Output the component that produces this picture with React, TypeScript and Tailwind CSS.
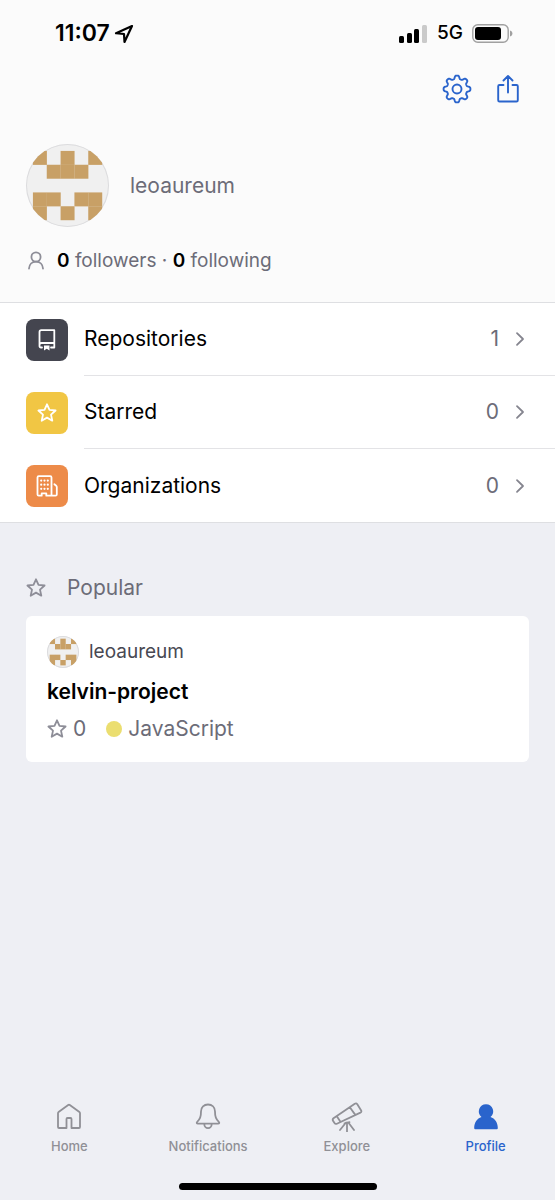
import React from 'react';

interface MenuItem {
  label: string;
  count: number;
  icon: React.ReactNode;
  bgClass: string;
}

interface TabItem {
  label: string;
  icon: React.ReactNode;
  active?: boolean;
}

const AVATAR_CELLS = [
  [0, 0], [2, 0], [4, 0],
  [1, 1], [2, 1], [3, 1],
  [0, 3], [1, 3], [3, 3], [4, 3],
  [0, 4], [2, 4], [4, 4],
];

const Avatar: React.FC<{ className: string }> = ({ className }) => (
  <svg viewBox="0 0 12 12" className={`shrink-0 rounded-full bg-[#f0f0f0] ring-1 ring-inset ring-[#dcdcde] ${className}`}>
    {AVATAR_CELLS.map(([x, y]) => (
      <rect key={`${x}-${y}`} x={1 + x * 2} y={1 + y * 2} width="2.02" height="2.02" fill="#c8a066" />
    ))}
  </svg>
);

const StarIcon: React.FC<{ className?: string }> = ({ className = '' }) => (
  <svg width="20" height="20" viewBox="0 0 20 20" fill="none" stroke="currentColor" strokeWidth="1.8" strokeLinejoin="round" className={`shrink-0 ${className}`}>
    <path d="M10 1.3l2.5 5.6 6.1.6-4.6 4.1 1.3 6.100L10 14.600l-5.300 3.100L6 11.600 1.400 7.500l6.100-.6z" />
  </svg>
);

const RepoIcon = () => (
  <svg width="18" height="22" viewBox="0 0 18 22" fill="none" stroke="currentColor" strokeWidth="1.8" strokeLinecap="round" strokeLinejoin="round">
    <path d="M4 18.500H3Q1.500 18.500 1.500 17V3Q1.500 1.200 3.300 1.200h13V18.500H13M1.500 15.500q.3-1.500 2-1.500h12.800" />
    <path d="M6 16.500h5.500v5l-2.750-1.800L6 21.500z" fill="currentColor" stroke="none" />
  </svg>
);

const OrganizationIcon = () => (
  <svg width="22" height="22" viewBox="0 0 22 22" fill="none" stroke="currentColor" strokeWidth="1.800" strokeLinecap="round" strokeLinejoin="round">
    <path d="M15.500 20.700V2.500q0-1.300-1.300-1.300H2.800Q1.500 1.200 1.500 2.500v17q0 1.200 1.200 1.200h3v-2.400h4.600v2.400h9.300q1.200 0 1.200-1.200V12q0-.8-.6-1.300l-1.800-1.500" />
    <path d="M5.200 5.600h.01M8.500 5.600h.01M11.800 5.600h.01M5.200 9.700h.01M8.500 9.700h.01M11.800 9.700h.01M5.200 13.800h.01M8.500 13.800h.01M11.800 13.800h.01" strokeWidth="2.200" />
  </svg>
);

const LocationIcon = () => (
  <svg width="20" height="20" viewBox="0 0 20 20" fill="none" stroke="currentColor" strokeWidth="2.200" strokeLinejoin="round">
    <path d="M18 2L2 9.200l8 .8.500 8z" />
  </svg>
);

const SignalIcon = () => (
  <svg width="29" height="18" viewBox="0 0 29 18" fill="currentColor">
    <rect x="0" y="11" width="5" height="7" rx="1.5" />
    <rect x="8" y="8" width="5" height="10" rx="1.5" />
    <rect x="15" y="4" width="5" height="14" rx="1.5" />
    <rect x="23" y="0" width="5" height="18" rx="1.5" fill="#cacaca" />
  </svg>
);

const BatteryIcon = () => (
  <svg width="41" height="19" viewBox="0 0 41 19" fill="none">
    <rect x=".8" y=".8" width="35.4" height="17.4" rx="5" stroke="#a0a0a0" strokeWidth="1.4" />
    <rect x="3" y="3" width="26" height="13" rx="3" fill="#000" />
    <path d="M38 6.5c1.5.4 2.4 1.5 2.4 3s-.9 2.6-2.4 3z" fill="#a0a0a0" />
  </svg>
);

// eight soft teeth around the hub
const GEAR_POINTS = Array.from({ length: 160 }, (_, i) => {
  const angle = (i / 160) * Math.PI * 2;
  const radius = 11.8 + 1.7 * Math.tanh(1.8 * Math.cos(8 * angle));
  return `${(15 + radius * Math.cos(angle)).toFixed(2)},${(15 + radius * Math.sin(angle)).toFixed(2)}`;
}).join(' ');

const GearIcon = () => (
  <svg width="30" height="30" viewBox="0 0 30 30" fill="none" stroke="currentColor" strokeWidth="1.9" strokeLinejoin="round">
    <circle cx="15" cy="15" r="4.500" />
    <polygon points={GEAR_POINTS} />
  </svg>
);

const ShareIcon = () => (
  <svg width="24" height="30" viewBox="0 0 24 30" fill="none" stroke="currentColor" strokeWidth="1.900" strokeLinecap="round" strokeLinejoin="round">
    <path d="M7.500 11H3.500Q2.200 11 2.200 12.300v13.900Q2.200 27.500 3.500 27.500h17q1.300 0 1.300-1.300V12.300q0-1.300-1.300-1.300H16.500M12 18.500V2M7.500 6.500L12 2l4.500 4.500" />
  </svg>
);

const FollowersIcon = () => (
  <svg width="20" height="20" viewBox="0 0 20 20" fill="none" stroke="currentColor" strokeWidth="1.800" strokeLinecap="round" className="text-[#8e8e98]">
    <circle cx="10" cy="6" r="4.600" />
    <path d="M3 17.500c.2-3.900 2.900-6.900 7-6.900s6.800 3 7 6.900" />
  </svg>
);

const ChevronIcon = () => (
  <svg width="10" height="16" viewBox="0 0 10 16" fill="none" stroke="currentColor" strokeWidth="1.800" strokeLinecap="round" strokeLinejoin="round" className="text-[#85858f]">
    <path d="M2 2.200L8 8l-6 5.800" />
  </svg>
);

const HomeIcon = () => (
  <svg width="32" height="32" viewBox="0 0 32 32" fill="none" stroke="currentColor" strokeWidth="1.800" strokeLinejoin="round">
    <path d="M5 13.200Q5 12.400 5.600 11.900L15.200 5q.8-.6 1.600 0l9.600 6.900q.6.500.6 1.300V27q0 1-1 1h-7.500V19q0-1-1-1h-3q-1 0-1 1v9H6q-1 0-1-1z" />
  </svg>
);

const BellIcon = () => (
  <svg width="32" height="32" viewBox="0 0 32 32" fill="none" stroke="currentColor" strokeWidth="1.800" strokeLinejoin="round">
    <path d="M9 11.500C9 7 12 4.500 16 4.500s7 2.500 7 7c0 5.500 1 7.300 3.900 10.500.7.900.3 1.700-.7 1.700H5.800c-1 0-1.400-.8-.7-1.700C8 18.800 9 17 9 11.500zM12.300 24c0 2.400 1.600 4.200 3.700 4.200s3.700-1.800 3.700-4.200" />
  </svg>
);

const TelescopeIcon = () => (
  <svg width="32" height="32" viewBox="0 0 32 32" fill="none" stroke="currentColor" strokeWidth="1.800" strokeLinecap="round" strokeLinejoin="round">
    <path d="M2.500 18.300L23.800 3.800q1.500-1 2.500.5l3.700 5.900q1 1.600-.6 2.400L5.900 23.700q-1.500.7-2.400-.6l-1.500-2.400q-.8-1.300.500-2.400zM5.800 16.200l3.800 5.700M18.800 7.300l5.500 7.600M16 22.500v9M14.800 22.800L9 30M17.500 22.800L23 30M13.500 23.300l5-1.200" />
  </svg>
);

const ProfileIcon = () => (
  <svg width="32" height="32" viewBox="0 0 32 32" fill="currentColor">
    <path d="M16 4.200a7.200 7.200 0 0 0-4.500 12.800C7 18.500 4.200 22.500 4.200 28q0 1.200 1 1.200h21.600q1 0 1-1.200c0-5.500-2.800-9.500-7.300-11A7.200 7.200 0 0 0 16 4.200z" />
  </svg>
);

const MENU: MenuItem[] = [
  { label: 'Repositories', count: 1, icon: <RepoIcon />, bgClass: 'bg-[#44454f]' },
  { label: 'Starred', count: 0, icon: <StarIcon />, bgClass: 'bg-[#f1c644]' },
  { label: 'Organizations', count: 0, icon: <OrganizationIcon />, bgClass: 'bg-[#ed8b49]' },
];

const TABS: TabItem[] = [
  { label: 'Home', icon: <HomeIcon /> },
  { label: 'Notifications', icon: <BellIcon /> },
  { label: 'Explore', icon: <TelescopeIcon /> },
  { label: 'Profile', icon: <ProfileIcon />, active: true },
];

const StatusBar = () => (
  <div className="flex h-[67px] items-center justify-between pl-[55px] pr-[42px] text-black">
    <div className="flex items-center gap-1">
      <span className="text-[23px] font-semibold">11:07</span>
      <LocationIcon />
    </div>
    <div className="flex items-center gap-[9px]">
      <SignalIcon />
      <span className="text-[19px] font-medium">5G</span>
      <BatteryIcon />
    </div>
  </div>
);

const App: React.FC = () => {
  return (
    <div className="flex min-h-screen flex-col bg-[#eeeff4] font-['Inter',sans-serif] text-[#6c6c78]">
      <header className="border-b border-[#dedfe2] bg-[#fbfbfb]">
        <StatusBar />
        <div className="flex h-11 items-center justify-end gap-6 pr-[35px] text-[#2a64cc]">
          <button aria-label="Settings"><GearIcon /></button>
          <button aria-label="Share"><ShareIcon /></button>
        </div>
        <div className="mt-[33px] flex items-center gap-[21px] px-[26px]">
          <Avatar className="size-[83px]" />
          <h1 className="text-[21px]">leoaureum</h1>
        </div>
        <div className="flex h-[75px] items-center gap-[11px] px-[26px] pb-2">
          <FollowersIcon />
          <p className="text-[19px] leading-8">
            <a href="#followers"><strong className="font-semibold text-black">0</strong> followers</a>
            {' · '}
            <a href="#following"><strong className="font-semibold text-black">0</strong> following</a>
          </p>
        </div>
      </header>

      <nav className="border-b border-[#dedfe2] bg-white">
        {MENU.map((item, index) => (
          <a key={item.label} href={`#${item.label.toLowerCase()}`} className="flex h-[73px] items-center gap-4 pl-[26px]">
            <span className={`flex size-[42px] shrink-0 items-center justify-center rounded-lg text-white ${item.bgClass}`}>
              {item.icon}
            </span>
            <span className={`flex h-full flex-1 items-center gap-4 pr-[30px] ${index < MENU.length - 1 ? 'border-b border-[#e3e3e6]' : ''}`}>
              <span className="flex-1 text-[21px] leading-8 text-black">{item.label}</span>
              <span className="text-[21px] leading-8">{item.count}</span>
              <ChevronIcon />
            </span>
          </a>
        ))}
      </nav>

      <main className="px-[26px] pt-[49px]">
        <h2 className="mb-3 flex items-center gap-[21px] text-[21px] leading-8">
          <StarIcon className="text-[#8e8e98]" /> Popular
        </h2>
        <article className="rounded-md bg-white px-[21px] pb-[17px] pt-5">
          <div className="flex items-center gap-[10px] text-[19px] text-[#484852]">
            <Avatar className="size-8" />
            <span>leoaureum</span>
          </div>
          <h3 className="mt-2 text-[21px] font-semibold leading-8 text-black">kelvin-project</h3>
          <div className="mt-[5px] flex items-center text-[21px] leading-8">
            <StarIcon className="text-[#8e8e98]" />
            <span className="ml-[6px] mr-5">0</span>
            <span className="mr-[6px] size-4 rounded-full bg-[#ebde70]"></span>
            <span>JavaScript</span>
          </div>
        </article>
      </main>

      <footer className="mt-auto pb-[10px] pt-10">
        <nav className="grid grid-cols-4">
          {TABS.map(tab => (
            <button key={tab.label} className={`flex flex-col items-center gap-1 ${tab.active ? 'text-[#2a64cc]' : 'text-[#909096]'}`}>
              {tab.icon}
              <span className="text-[13px] font-medium leading-5">{tab.label}</span>
            </button>
          ))}
        </nav>
        <div className="mx-auto mt-[27px] h-[7px] w-[198px] rounded-full bg-black"></div>
      </footer>
    </div>
  );
};

export default App;
